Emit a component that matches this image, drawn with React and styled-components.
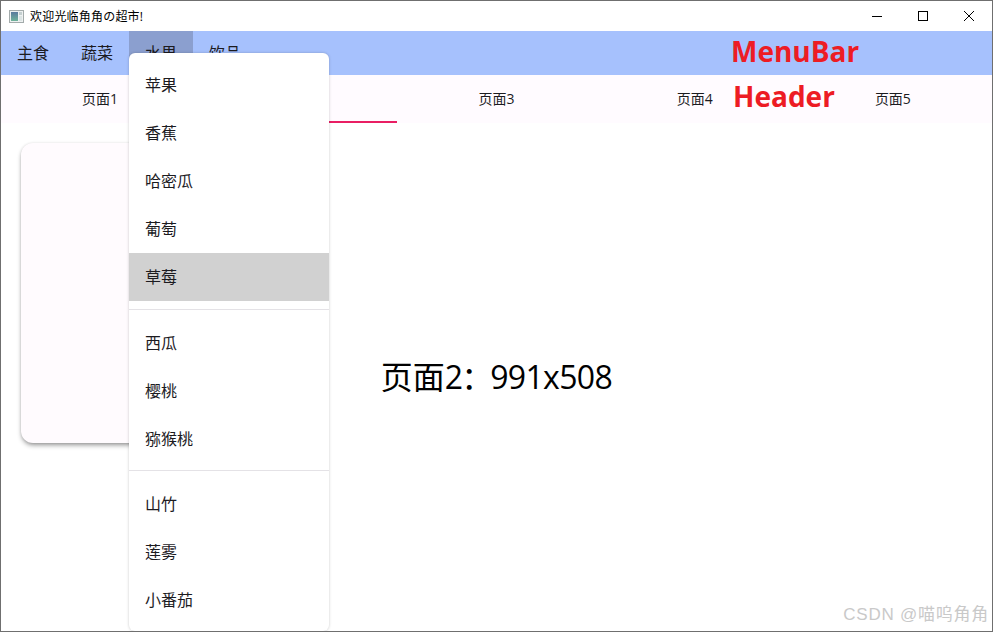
import React from "react";
import styled, { createGlobalStyle } from "styled-components";

const cjk = `"Open Sans", "Noto Sans CJK SC", sans-serif`;

const GlobalStyle = createGlobalStyle`
  html, body {
    margin: 0;
    padding: 0;
    background: #fff;
    overflow: hidden;
  }
`;

const Window = styled.div`
  position: relative;
  box-sizing: border-box;
  width: 993px;
  height: 632px;
  border: 1px solid #6f6f6f;
  display: flex;
  flex-direction: column;
  overflow: hidden;
  font-family: ${cjk};
  color: #1c1b1f;
`;

const TitleBar = styled.div`
  height: 30px;
  flex: none;
  display: flex;
  align-items: center;
  background: #fff;
  padding-left: 8px;
`;

const TitleText = styled.span`
  margin-left: 6px;
  font-size: 12px;
  letter-spacing: 0.2px;
  color: #000;
`;

const WindowControls = styled.div`
  margin-left: auto;
  display: flex;
  height: 100%;
`;

const ControlButton = styled.div`
  width: 46px;
  display: flex;
  align-items: center;
  justify-content: center;
`;

const MenuBar = styled.div`
  height: 44px;
  flex: none;
  display: flex;
  align-items: stretch;
  background: #a6c1fd;
`;

const MenuBarItem = styled.div`
  width: 64px;
  box-sizing: border-box;
  padding-bottom: 2px;
  display: flex;
  align-items: center;
  justify-content: center;
  font-size: 16px;
  background: ${(p) => (p.$open ? "#8b9fcf" : "transparent")};
`;

const TabHeader = styled.div`
  height: 48px;
  flex: none;
  display: grid;
  grid-template-columns: repeat(5, 1fr);
  background: #fffbff;
`;

const Tab = styled.div`
  display: flex;
  align-items: center;
  justify-content: center;
  font-size: 14px;
  box-sizing: border-box;
  border-bottom: 2px solid ${(p) => (p.$active ? "#e91e63" : "transparent")};
  padding-top: ${(p) => (p.$active ? "2px" : "0")};
`;

const Page = styled.div`
  flex: 1;
  display: grid;
  background: #fff;

  & > * {
    grid-area: 1 / 1;
  }
`;

const Card = styled.div`
  justify-self: start;
  align-self: start;
  width: 300px;
  height: 300px;
  margin: 20px 0 0 20px;
  border-radius: 12px;
  background: #fffbfe;
  box-shadow: 0 3px 5px -1px rgba(0, 0, 0, 0.42), 0 0 3px rgba(0, 0, 0, 0.1);
`;

const PageLabel = styled.div`
  place-self: center;
  padding-bottom: 4px;
  font-size: 32px;
  color: #000;
  white-space: nowrap;
`;

const LabelSize = styled.span`
  letter-spacing: -0.65px;
`;

const LabelColon = styled.span`
  margin: 0 -3px 0 -2px;
`;

const Dropdown = styled.div`
  position: absolute;
  left: 128px;
  top: 52px;
  width: 200px;
  box-sizing: border-box;
  padding: 8px 0 7px;
  background: #fff;
  border-radius: 6px;
  box-shadow: 0 0 3px rgba(0, 0, 0, 0.22);
`;

const DropdownItem = styled.div`
  height: 48px;
  box-sizing: border-box;
  display: flex;
  align-items: center;
  padding: 0 0 2px 16px;
  font-size: 16px;
  background: ${(p) => (p.$hover ? "#d1d1d1" : "transparent")};
`;

const Divider = styled.div`
  height: 1px;
  margin: 7.75px 0 8.75px;
  background: #e4e2e6;
`;

const Annotation = styled.div`
  position: absolute;
  left: ${(p) => p.$left}px;
  top: ${(p) => p.$top}px;
  font-size: 28px;
  line-height: 36px;
  font-weight: 700;
  color: #ed1c24;
`;

const Watermark = styled.div`
  position: absolute;
  right: 3px;
  bottom: 5px;
  font-family: "Liberation Sans", "Noto Sans CJK SC", sans-serif;
  font-size: 17px;
  line-height: 22px;
  letter-spacing: 0.75px;
  color: #c9c9c9;
  white-space: nowrap;
`;

const AppIcon = () => (
  <svg width="15" height="13" viewBox="0 0 15 13">
    <defs>
      <linearGradient id="appIconFill" x1="0" y1="0" x2="0" y2="1">
        <stop offset="0" stopColor="#5a7a9e" />
        <stop offset="1" stopColor="#6fb39a" />
      </linearGradient>
    </defs>
    <rect x="0.5" y="0.5" width="14" height="12" fill="#eef1f1" stroke="#a3abab" />
    <rect x="2" y="2" width="7" height="9" fill="url(#appIconFill)" />
    <rect x="10" y="2" width="3" height="3" fill="#c4cfd0" />
    <rect x="10" y="6" width="3" height="5" fill="#dbe4e4" />
  </svg>
);

const MinimizeIcon = () => (
  <svg width="10" height="10" viewBox="0 0 10 10">
    <path d="M0 5.5H10" stroke="#000" strokeWidth="1" />
  </svg>
);

const MaximizeIcon = () => (
  <svg width="10" height="10" viewBox="0 0 10 10">
    <rect x="0.5" y="0.5" width="9" height="9" fill="none" stroke="#000" strokeWidth="1" />
  </svg>
);

const CloseIcon = () => (
  <svg width="10" height="10" viewBox="0 0 10 10">
    <path d="M0 0L10 10M10 0L0 10" stroke="#000" strokeWidth="1" />
  </svg>
);

const menuNames = ["主食", "蔬菜", "水果", "饮品"];
const tabNames = ["页面1", "页面2", "页面3", "页面4", "页面5"];
const fruitGroups = [
  ["苹果", "香蕉", "哈密瓜", "葡萄", "草莓"],
  ["西瓜", "樱桃", "猕猴桃"],
  ["山竹", "莲雾", "小番茄"],
];

const App = () => {
  return (
    <Window>
      <GlobalStyle />
      <TitleBar>
        <AppIcon />
        <TitleText>欢迎光临角角の超市!</TitleText>
        <WindowControls>
          <ControlButton>
            <MinimizeIcon />
          </ControlButton>
          <ControlButton>
            <MaximizeIcon />
          </ControlButton>
          <ControlButton>
            <CloseIcon />
          </ControlButton>
        </WindowControls>
      </TitleBar>
      <MenuBar>
        {menuNames.map((name) => (
          <MenuBarItem key={name} $open={name === "水果"}>
            {name}
          </MenuBarItem>
        ))}
      </MenuBar>
      <TabHeader>
        {tabNames.map((name) => (
          <Tab key={name} $active={name === "页面2"}>
            {name}
          </Tab>
        ))}
      </TabHeader>
      <Page>
        <Card />
        <PageLabel>
          页面2<LabelColon>：</LabelColon>
          <LabelSize>991x508</LabelSize>
        </PageLabel>
      </Page>
      <Dropdown>
        {fruitGroups.map((group, i) => (
          <React.Fragment key={group[0]}>
            {i > 0 && <Divider />}
            {group.map((fruit) => (
              <DropdownItem key={fruit} $hover={fruit === "草莓"}>
                {fruit}
              </DropdownItem>
            ))}
          </React.Fragment>
        ))}
      </Dropdown>
      <Annotation $left={730} $top={32}>MenuBar</Annotation>
      <Annotation $left={732} $top={77}>Header</Annotation>
      <Watermark>CSDN @喵呜角角</Watermark>
    </Window>
  );
};

export default App;
